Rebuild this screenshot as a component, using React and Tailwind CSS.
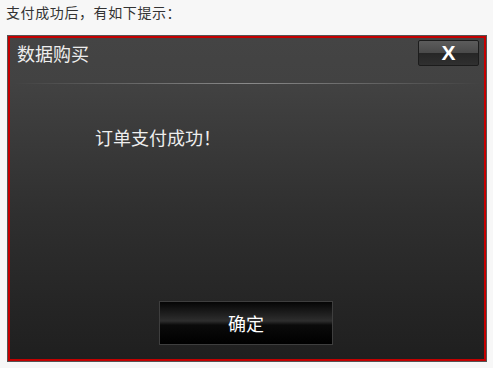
import React from "react";

const cjk = { fontFamily: '"Noto Sans CJK SC", "Liberation Sans", sans-serif' };

const App = () => {
  return (
    <div
      className="w-[493px] h-[368px] bg-[#f7f7f7] pt-[2px] pl-[6px] overflow-hidden"
      style={cjk}
    >
      <p className="text-[14px] leading-[20px] tracking-[0.6px] text-[#333]">支付成功后，有如下提示：</p>
      <div className="mt-[13px] ml-[1px] w-[480px] h-[327px] border border-[#555]">
        <div className="h-full border-2 border-[#c40000] bg-[linear-gradient(to_bottom,#444444_0%,#424242_14%,#2f2f2f_55%,#1f1f1f_100%)] flex flex-col">
          <div className="relative h-[45px]">
            <span className="absolute left-[7px] top-[3px] text-[18px] leading-[24px] text-[#eeeeee]">
              数据购买
            </span>
            <button className="absolute right-[5px] top-[2px] w-[61px] h-[26px] border border-[#1c1c1c] rounded-[2px] bg-[linear-gradient(to_bottom,#5c5c5c_0%,#4a4a4a_48%,#262626_52%,#303030_100%)] flex items-center justify-center pb-[2px]">
              <span
                className="text-white text-[21px] font-bold leading-none"
                style={{ fontFamily: '"Liberation Sans", sans-serif' }}
              >
                X
              </span>
            </button>
          </div>
          <div className="mx-[4px] h-px bg-[linear-gradient(to_right,rgba(140,140,140,0)_0%,#8a8a8a_50%,rgba(140,140,140,0)_100%)]" />
          <div className="pl-[85px] pt-[41px] text-[18px] leading-[24px] text-[#eeeeee]">
            订单支付成功！
          </div>
          <div className="flex-1" />
          <button className="ml-[149px] mb-[14px] w-[174px] h-[44px] border border-[#3e3e3e] bg-[linear-gradient(to_bottom,#050505_0%,#2e2e2e_45%,#0a0a0a_55%,#000000_100%)] text-white text-[18px] flex items-center justify-center">
            确定
          </button>
        </div>
      </div>
    </div>
  );
};

export default App;
